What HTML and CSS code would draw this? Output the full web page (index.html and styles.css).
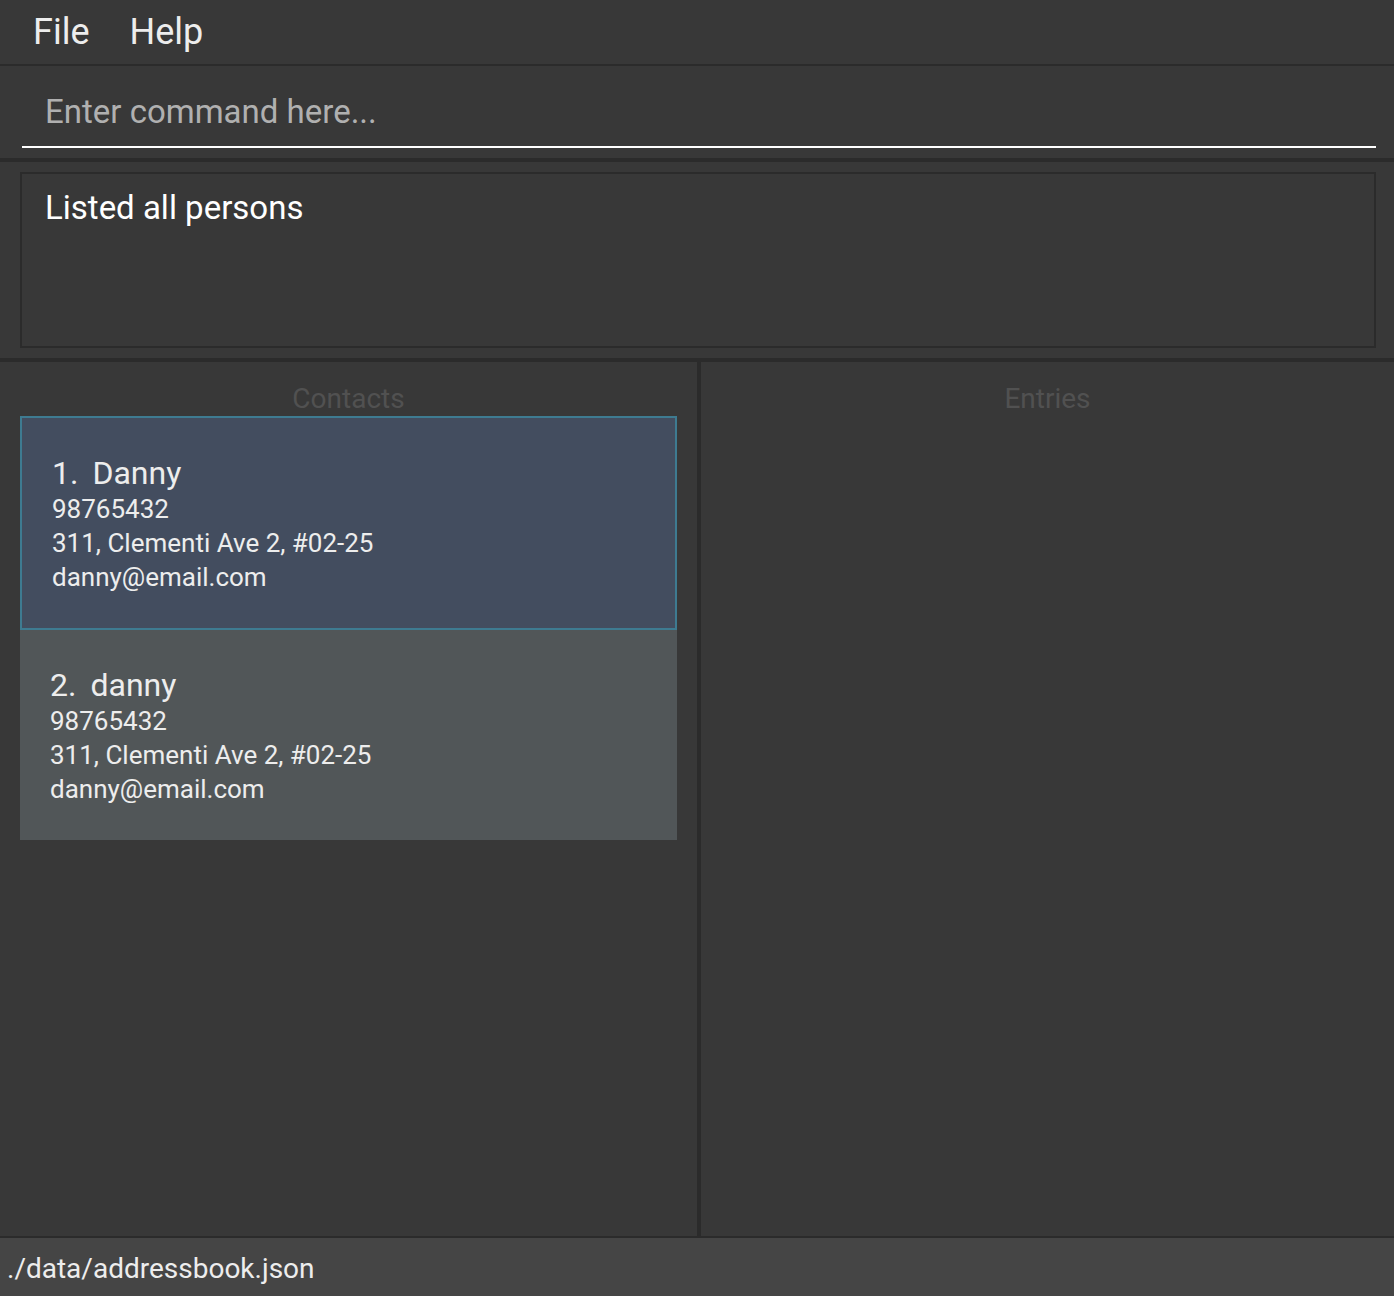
FILE: index.html
```html
<!DOCTYPE html>
<html lang="en">
<head>
<meta charset="utf-8">
<title>Address Book</title>
<link rel="stylesheet" href="styles.css">
</head>
<body>
<div class="app">
  <nav class="menu-bar">
    <button class="menu" type="button">File</button>
    <button class="menu" type="button">Help</button>
  </nav>
  <form class="command">
    <input class="command-input" type="text" aria-label="Command" placeholder="Enter command here...">
  </form>
  <section class="result">
    <textarea class="result-text" aria-label="Result" readonly>Listed all persons</textarea>
  </section>
  <main class="split">
    <section class="pane">
      <h2 class="pane-title">Contacts</h2>
      <ul class="list">
        <li class="card card-selected">
          <h3 class="name"><span>1.</span><span>Danny</span></h3>
          <p class="detail">98765432</p>
          <p class="detail">311, Clementi Ave 2, #02-25</p>
          <p class="detail">danny@email.com</p>
        </li>
        <li class="card">
          <h3 class="name"><span>2.</span><span>danny</span></h3>
          <p class="detail">98765432</p>
          <p class="detail">311, Clementi Ave 2, #02-25</p>
          <p class="detail">danny@email.com</p>
        </li>
      </ul>
    </section>
    <section class="pane">
      <h2 class="pane-title">Entries</h2>
    </section>
  </main>
  <footer class="status">./data/addressbook.json</footer>
</div>
</body>
</html>
```
FILE: styles.css
```css
* {
  box-sizing: border-box;
}

body {
  margin: 0;
  background: #383838;
  color: #ededed;
  font-family: Roboto, "Liberation Sans", sans-serif;
}

h2,
h3,
p,
ul {
  margin: 0;
  padding: 0;
  font-weight: 400;
}

.app {
  display: flex;
  flex-direction: column;
  min-height: 100vh;
}

.menu-bar {
  display: flex;
  gap: 40px;
  padding: 10px 33px;
  border-bottom: 2px solid #2b2b2b;
}

.menu {
  padding: 0;
  border: 0;
  background: none;
  color: inherit;
  font: inherit;
  font-size: 36px;
  line-height: 44px;
}

.command {
  display: flex;
  padding: 10px 18px 10px 22px;
  border-bottom: 4px solid #2b2b2b;
}

.command-input {
  flex: 1;
  min-width: 0;
  padding: 15px 23px 13px;
  border: 0;
  border-bottom: 2px solid #fff;
  outline: 0;
  background: none;
  color: #fff;
  font: inherit;
  font-size: 33px;
  line-height: 42px;
}

.command-input::placeholder {
  color: #b0b0b0;
  opacity: 1;
}

.result {
  display: flex;
  padding: 10px 18px 10px 20px;
  border-bottom: 4px solid #2b2b2b;
}

.result-text {
  flex: 1;
  min-width: 0;
  height: 176px;
  padding: 13px 23px;
  border: 2px solid #2b2b2b;
  outline: 0;
  background: none;
  color: #fff;
  font: inherit;
  font-size: 33px;
  line-height: 42px;
  resize: none;
}

.split {
  display: grid;
  flex: 1;
  grid-template-columns: 1fr 1fr;
}

.pane {
  padding: 20px;
}

.pane + .pane {
  border-left: 4px solid #2b2b2b;
}

.pane-title {
  color: #515151;
  font-size: 28px;
  line-height: 34px;
  text-align: center;
}

.list {
  list-style: none;
}

.card {
  padding: 36px 30px 34px;
  background: #515658;
}

.card-selected {
  border: 2px solid #3e7b91;
  background: #434d5f;
}

.name {
  display: flex;
  gap: 14px;
  font-size: 32px;
  line-height: 38px;
}

.detail {
  font-size: 26px;
  line-height: 34px;
}

.status {
  padding: 14px 7px 10px;
  border-top: 2px solid #2b2b2b;
  background: #454545;
  font-size: 28px;
  line-height: 34px;
}
```
